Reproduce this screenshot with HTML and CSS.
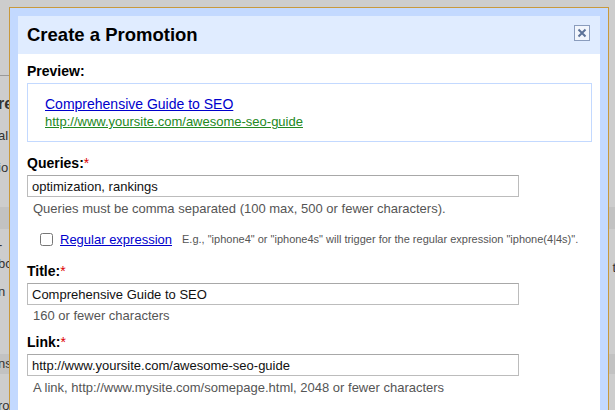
FILE: index.html
```html
<!DOCTYPE html>
<html lang="en">
<head>
  <meta charset="UTF-8">
  <title>Create a Promotion</title>
  <link rel="stylesheet" href="styles.css">
</head>
<body>
  <div class="page">
    <div class="page-rule"></div>
    <div class="page-line big">re</div>
    <div class="page-line">al</div>
    <div class="page-line">io</div>
    <div class="page-band"></div>
    <div class="page-line short">-</div>
    <div class="page-line short">bc</div>
    <div class="page-line short gap">n</div>
    <div class="page-band dark">ns</div>
    <div class="page-line short">ro</div>
    <div class="page-right">ti</div>
  </div>

  <div class="dialog">
    <div class="frame">
      <div class="dialog-head">
        <h1>Create a Promotion</h1>
        <span class="close">
          <svg width="16" height="16" viewBox="0 0 16 16">
            <rect x="0.5" y="0.5" width="15" height="15" fill="#f2f6fd" stroke="#8a9cbd"/>
            <path d="M4.5 4.5 L11.5 11.5 M11.5 4.5 L4.5 11.5" stroke="#5d7399" stroke-width="2"/>
          </svg>
        </span>
      </div>
      <div class="dialog-body">
        <div class="label">Preview:</div>
        <div class="preview">
          <a href="#" class="preview-title">Comprehensive Guide to SEO</a>
          <a href="#" class="preview-url">http://www.yoursite.com/awesome-seo-guide</a>
        </div>

        <div class="label">Queries:<span class="req">*</span></div>
        <input type="text" class="field" value="optimization, rankings">
        <div class="hint">Queries must be comma separated (100 max, 500 or fewer characters).</div>

        <div class="regex">
          <input type="checkbox" class="check">
          <a href="#" class="regex-link">Regular expression</a>
          <span class="small">E.g., "iphone4" or "iphone4s" will trigger for the regular expression "iphone(4|4s)".</span>
        </div>

        <div class="label">Title:<span class="req">*</span></div>
        <input type="text" class="field" value="Comprehensive Guide to SEO">
        <div class="hint tight">160 or fewer characters</div>

        <div class="label">Link:<span class="req">*</span></div>
        <input type="text" class="field" value="http://www.yoursite.com/awesome-seo-guide">
        <div class="hint">A link, http://www.mysite.com/somepage.html, 2048 or fewer characters</div>
      </div>
    </div>
  </div>
</body>
</html>
```

FILE: styles.css
```css
body {
  margin: 0;
  background: #cdcdcd;
  font-family: "Liberation Sans", Arial, sans-serif;
  color: #000;
  overflow: hidden;
  height: 410px;
}

/* page behind the dialog, only its left edge shows */
.page {
  position: relative;
  height: 410px;
  padding-top: 75px;
  box-sizing: border-box;
  font-size: 13px;
  color: #333;
}
.page-rule {
  border-top: 1px solid #999;
  width: 9px;
  margin-bottom: 13px;
}
.page-line {
  height: 32px;
  line-height: 30px;
  margin-left: -2px;
}
.page-line.big {
  font-size: 16px;
  font-weight: bold;
}
.page-line.short {
  height: 19px;
  line-height: 19px;
}
.page-line.gap {
  margin-top: 9px;
  margin-bottom: 53px;
}
.page-band {
  height: 22px;
  background: #c2c2c2;
  margin: 22px 0 6px;
}
.page-band.dark {
  margin: 0 0 22px -2px;
  line-height: 20px;
  height: 20px;
}
.page-right {
  position: absolute;
  right: -4px;
  top: 260px;
}

.dialog {
  position: absolute;
  left: 9px;
  top: 7px;
  width: 598px;
  height: 403px;
  border: 1px solid #c8993d;
  border-bottom: none;
  background: #c3d9ff;
}
.frame {
  margin: 8px 8px 0 8px;
  background: #fff;
  height: 395px;
  overflow: hidden;
}
.dialog-head {
  background: #e0ecff;
  height: 38px;
  display: flex;
  align-items: center;
  justify-content: space-between;
  padding: 0 10px 0 9px;
}
h1 {
  margin: 0;
  font-size: 18.5px;
  font-weight: bold;
}
.close {
  display: flex;
  margin-top: -4px;
}
.dialog-body {
  padding: 7px 8px 0 9px;
}
.label {
  font-size: 14px;
  font-weight: bold;
  line-height: 16px;
  padding-top: 2px;
}
.req {
  color: #dd0000;
  font-weight: normal;
}
.preview {
  border: 1px solid #c3d9ff;
  margin: 4px 0 11px;
  height: 59px;
  padding: 12px 0 0 17px;
  box-sizing: border-box;
  display: flex;
  flex-direction: column;
  align-items: flex-start;
}
.preview-title {
  color: #0000cc;
  font-size: 14px;
  line-height: 17px;
}
.preview-url {
  color: #228822;
  font-size: 13px;
  line-height: 17px;
}
.field {
  display: block;
  box-sizing: border-box;
  width: 492px;
  height: 22px;
  margin: 4px 0 0;
  padding: 0 4px;
  border: 1px solid #bcbcbc;
  border-top-color: #a8a8a8;
  font-family: "Liberation Sans", Arial, sans-serif;
  font-size: 13px;
  color: #111;
}
.hint {
  font-size: 13px;
  color: #555;
  padding-left: 6px;
  line-height: 17px;
  margin-top: 3px;
  margin-bottom: 10px;
}
.hint.tight {
  margin-top: 2px;
  margin-bottom: 8px;
}
.regex {
  display: flex;
  align-items: center;
  padding-left: 13px;
  margin: 12px 0 12px;
  height: 20px;
}
.check {
  margin: 0 7px 0 0;
  width: 13px;
  height: 13px;
}
.regex-link {
  color: #0000cc;
  font-size: 13px;
  margin-right: 10px;
}
.small {
  font-size: 11px;
  color: #555;
}
```
